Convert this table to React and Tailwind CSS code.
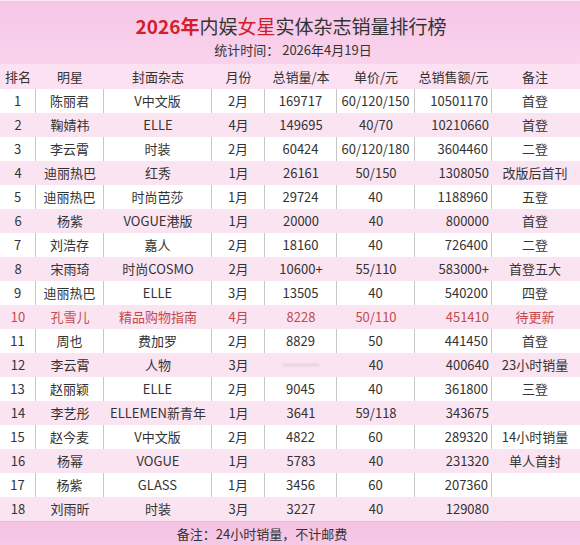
import React from "react";

const rows = [
  ["1", "陈丽君", "V中文版", "2月", "169717", "60/120/150", "10501170", "首登"],
  ["2", "鞠婧祎", "ELLE", "4月", "149695", "40/70", "10210660", "首登"],
  ["3", "李云霄", "时装", "2月", "60424", "60/120/180", "3604460", "二登"],
  ["4", "迪丽热巴", "红秀", "1月", "26161", "50/150", "1308050", "改版后首刊"],
  ["5", "迪丽热巴", "时尚芭莎", "1月", "29724", "40", "1188960", "五登"],
  ["6", "杨紫", "VOGUE港版", "1月", "20000", "40", "800000", "首登"],
  ["7", "刘浩存", "嘉人", "2月", "18160", "40", "726400", "二登"],
  ["8", "宋雨琦", "时尚COSMO", "2月", "10600+", "55/110", "583000+", "首登五大"],
  ["9", "迪丽热巴", "ELLE", "3月", "13505", "40", "540200", "四登"],
  ["10", "孔雪儿", "精品购物指南", "4月", "8228", "50/110", "451410", "待更新"],
  ["11", "周也", "费加罗", "2月", "8829", "50", "441450", "首登"],
  ["12", "李云霄", "人物", "3月", null, "40", "400640", "23小时销量"],
  ["13", "赵丽颖", "ELLE", "2月", "9045", "40", "361800", "三登"],
  ["14", "李艺彤", "ELLEMEN新青年", "1月", "3641", "59/118", "343675", ""],
  ["15", "赵今麦", "V中文版", "2月", "4822", "60", "289320", "14小时销量"],
  ["16", "杨幂", "VOGUE", "1月", "5783", "40", "231320", "单人首封"],
  ["17", "杨紫", "GLASS", "1月", "3456", "60", "207360", ""],
  ["18", "刘雨昕", "时装", "3月", "3227", "40", "129080", ""],
];

const headers = ["排名", "明星", "封面杂志", "月份", "总销量/本", "单价/元", "总销售额/元", "备注"];

const cols = "grid grid-cols-[36px_68px_108px_53px_72px_78px_77px_86px]";

export default function App() {
  return (
    <div
      className="w-[580px] h-[545px] overflow-hidden bg-[#f8cdea] text-[#333]"
      style={{ fontFamily: '"Noto Sans CJK SC", "Noto Sans", sans-serif' }}
    >
      {/* Title */}
      <div className="h-[64px] flex flex-col items-center bg-gradient-to-b from-[#f6c6e6] to-[#f9d3ec] border-t border-[#fbe6f3]">
        <div className="mt-[12px] h-[26px] leading-[26px] text-[19px] pl-[2px]">
          <span className="font-bold text-[#d0202c]">2026年</span>
          <span>内娱</span>
          <span className="text-[#d0202c]">女星</span>
          <span>实体杂志销量排行榜</span>
        </div>
        <div className="mt-[2px] text-[13px] leading-[18px] pl-[6px]">统计时间：&nbsp;2026年4月19日</div>
      </div>

      {/* Header */}
      <div className={`${cols} h-[25px] bg-[#fbe1f1] text-[13px] leading-[25px] text-center`}>
        {headers.map((h) => (
          <div key={h}>{h}</div>
        ))}
      </div>

      {/* Rows */}
      {rows.map((r, i) => {
        const white = i % 2 === 0;
        const red = r[0] === "10";
        return (
          <div
            key={r[0]}
            className={`${cols} h-[24px] text-[13px] leading-[24px] text-center ${
              white ? "bg-white" : "bg-[#fbe4f1]"
            } ${red ? "text-[#c34a4c]" : ""}`}
          >
            {r.map((c, j) => (
              <div
                key={j}
                className={`${white && j < 7 ? "border-r border-[#c9c6c8]" : ""} ${
                  j === 6 ? "text-right pr-[3px]" : ""
                } whitespace-nowrap`}
              >
                {c === null ? (
                  <div className="mx-auto mt-[11px] w-[36px] h-[2px] bg-[#d8cdd4] blur-[1px]" />
                ) : (
                  c
                )}
              </div>
            ))}
          </div>
        );
      })}

      {/* Footer */}
      <div className="h-[24px] bg-gradient-to-b from-[#f5c3e3] to-[#f6c9e6] border-t border-[#efb7da] flex justify-center pr-[56px] text-[13px] leading-[24px]">
        备注：24小时销量，不计邮费
      </div>
    </div>
  );
}
